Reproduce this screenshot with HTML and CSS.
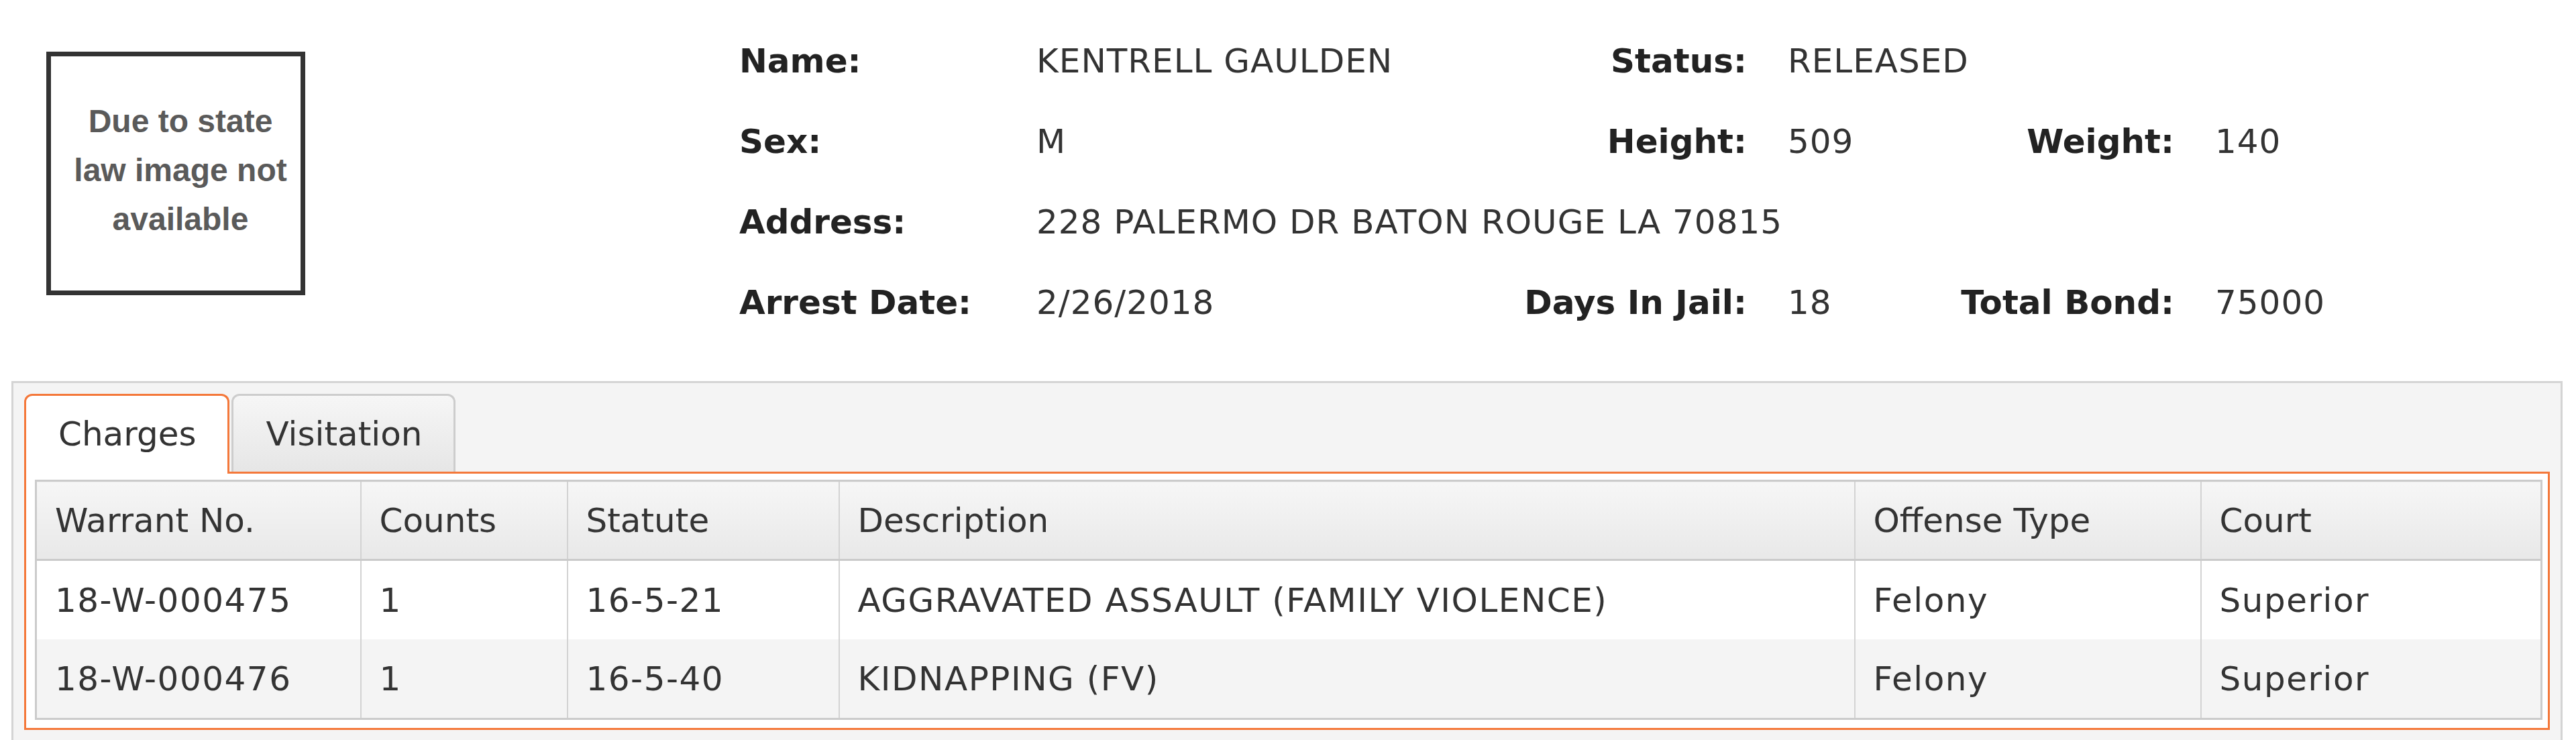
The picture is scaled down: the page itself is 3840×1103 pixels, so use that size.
FILE: index.html
```html
<!DOCTYPE html>
<html>
<head>
<meta charset="utf-8">
<title>Inmate Detail</title>
<link rel="stylesheet" href="styles.css">
</head>
<body>
<div class="top">
  <div class="photo"><p>Due to state<br>law image not<br>available</p></div>
  <div class="info">
    <span class="lbl">Name:</span><span class="val">KENTRELL GAULDEN</span><span class="lbl r">Status:</span><span class="val pad">RELEASED</span><span></span><span></span>
    <span class="lbl">Sex:</span><span class="val">M</span><span class="lbl r">Height:</span><span class="val pad">509</span><span class="lbl r">Weight:</span><span class="val pad">140</span>
    <span class="lbl">Address:</span><span class="val wide">228 PALERMO DR BATON ROUGE LA 70815</span>
    <span class="lbl">Arrest Date:</span><span class="val">2/26/2018</span><span class="lbl r">Days In Jail:</span><span class="val pad">18</span><span class="lbl r">Total Bond:</span><span class="val pad">75000</span>
  </div>
</div>
<div class="panel">
  <div class="tabs">
    <div class="tab active">Charges</div>
    <div class="tab">Visitation</div>
  </div>
  <div class="content">
    <table class="charges">
      <colgroup>
        <col class="c1"><col class="c2"><col class="c3"><col class="c4"><col class="c5"><col>
      </colgroup>
      <thead>
        <tr><th>Warrant No.</th><th>Counts</th><th>Statute</th><th>Description</th><th>Offense Type</th><th>Court</th></tr>
      </thead>
      <tbody>
        <tr><td>18-W-000475</td><td>1</td><td>16-5-21</td><td>AGGRAVATED ASSAULT (FAMILY VIOLENCE)</td><td>Felony</td><td>Superior</td></tr>
        <tr class="alt"><td>18-W-000476</td><td>1</td><td>16-5-40</td><td>KIDNAPPING (FV)</td><td>Felony</td><td>Superior</td></tr>
      </tbody>
    </table>
  </div>
</div>
</body>
</html>
```
FILE: styles.css
```css
html, body {
  margin: 0;
  padding: 0;
  background: #fff;
}
body {
  font-family: "DejaVu Sans", Verdana, sans-serif;
  font-size: 50px;
  color: #333;
}
.top {
  display: flex;
  align-items: flex-start;
  padding: 31px 0 0 69px;
}
.photo {
  margin-top: 46px;
  width: 386px;
  height: 363px;
  box-sizing: border-box;
  border: 7px solid #333;
  flex: none;
}
.photo p {
  margin: 0;
  padding: 60px 0 0 14px;
  text-align: center;
  font-family: "Liberation Sans", Arial, sans-serif;
  font-weight: bold;
  font-size: 48px;
  line-height: 73px;
  color: #5a5a5a;
  white-space: nowrap;
}
.info {
  margin-left: 647px;
  display: grid;
  grid-template-columns: 443px 610px 449px 296px 341px auto;
  grid-auto-rows: 120px;
  line-height: 120px;
  white-space: nowrap;
}
.lbl {
  font-weight: bold;
  color: #222;
}
.lbl.r {
  text-align: right;
}
.val {
  color: #333;
  letter-spacing: 1px;
}
.val.pad {
  padding-left: 61px;
}
.val.wide {
  grid-column: 2 / 7;
}
.panel {
  margin: 57px 20px 0 17px;
  border: 3px solid #d4d4d4;
  background: #f4f4f4;
  padding: 16px 16px 16px;
}
.tabs {
  display: flex;
  align-items: flex-end;
  gap: 3px;
  height: 116px;
}
.tab {
  height: 116px;
  box-sizing: border-box;
  border: 3px solid #cdcdcd;
  border-bottom: 0;
  border-radius: 12px 12px 0 0;
  padding: 0 47px 0 48px;
  display: flex;
  align-items: center;
  color: #333;
  background: linear-gradient(#f6f6f6, #e6e6e6);
}
.tab.active {
  background: #fff;
  border-color: #f4783a;
  height: 119px;
  padding-bottom: 3px;
  margin-bottom: -3px;
  position: relative;
  z-index: 1;
}
.content {
  border: 3px solid #f4783a;
  background: #fff;
  padding: 9px 8px 12px 13px;
}
.charges {
  width: 100%;
  border-collapse: collapse;
  table-layout: fixed;
  border: 3px solid #cbcbcb;
  color: #333;
  font-size: 50px;
}
.c1 { width: 484px; }
.c2 { width: 308px; }
.c3 { width: 405px; }
.c4 { width: 1514px; }
.c5 { width: 516px; }
.charges th {
  height: 115px;
  padding: 0 0 0 27px;
  text-align: left;
  font-weight: normal;
  background: linear-gradient(#f6f6f6, #e8e8e8);
  border-bottom: 3px solid #cbcbcb;
  border-left: 2px solid #d3d3d3;
  white-space: nowrap;
}
.charges td {
  height: 117px;
  padding: 0 0 0 27px;
  border-left: 2px solid #d3d3d3;
  background: #fff;
  white-space: nowrap;
  letter-spacing: 1.5px;
}
.charges tr.alt td {
  background: #f4f4f4;
}
```
